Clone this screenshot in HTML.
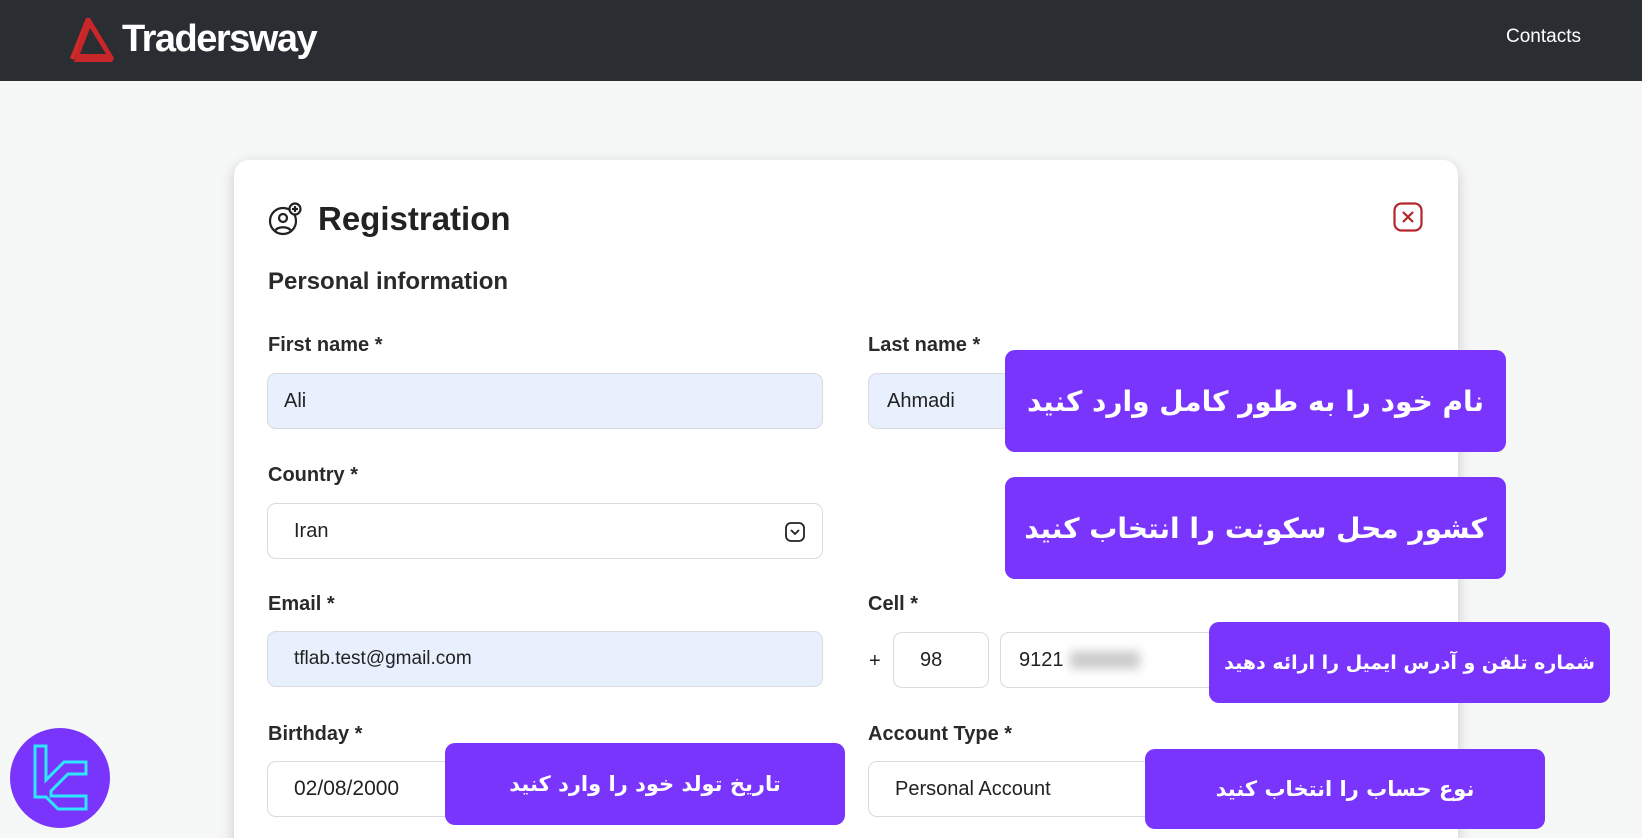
<!DOCTYPE html>
<html style="overflow:hidden;height:838px"><head><meta charset="utf-8"><style>
*{box-sizing:border-box;margin:0;padding:0}
body{width:1642px;height:838px;overflow:hidden;background:#f6f7f7;font-family:"Liberation Sans",sans-serif;position:relative;color:#222}
.hdr{position:absolute;left:0;top:0;width:1642px;height:81px;background:#2a2d32}
.abs{position:absolute}
.card{position:absolute;left:234px;top:160px;width:1224px;height:700px;background:#fff;border-radius:15px 15px 0 0;box-shadow:0 4px 14px rgba(0,0,0,.18)}
.lbl{position:absolute;font-size:20px;font-weight:bold;color:#2a2a2a}
.inp{position:absolute;height:56px;border:1px solid #d8dadd;border-radius:9px;font-size:20px;color:#222;display:flex;align-items:center;padding-left:16px}
.blue{background:#e8f0fe}
.ov{position:absolute;background:#7a35fd;border-radius:10px;color:#fff;font-family:"DejaVu Sans",sans-serif;font-weight:bold;display:flex;align-items:center;justify-content:center;direction:rtl;white-space:nowrap;letter-spacing:-0.5px}
</style></head><body>
<div class="hdr"></div>
<svg class="abs" style="left:68px;top:16px" width="52" height="46" viewBox="0 0 52 46">
<path d="M18 2 L2 42 L6 44 L20 8 Z" fill="#d02a2a"/>
<path d="M18 2 L22 2 L46 42 L44 46 L6 46 Z M22 12 L12 38 L38 38 Z" fill="#c9262a" fill-rule="evenodd"/>
<path d="M14 32 L22 18 L30 32 Z" fill="#2a2d32"/>
</svg>
<div class="abs" style="left:122px;top:18px;font-size:38px;font-weight:bold;color:#fff;letter-spacing:-1.5px">Tradersway</div>
<div class="abs" style="left:1506px;top:26px;font-size:19px;color:#fff">Contacts</div>
<div class="card"></div>
<svg class="abs" style="left:268px;top:202px" width="34" height="34" viewBox="0 0 34 34" fill="none" stroke="#222" stroke-width="2.2">
<circle cx="15" cy="19" r="13"/><circle cx="15" cy="16" r="4"/><path d="M7 29c2-5 14-5 16 0"/>
<circle cx="27" cy="7" r="5.5" fill="#fff"/><path d="M27 4v6M24 7h6"/></svg>
<div class="abs" style="left:318px;top:200px;font-size:33px;font-weight:bold;color:#222">Registration</div>
<svg class="abs" style="left:1393px;top:202px" width="30" height="30" viewBox="0 0 30 30" fill="none" stroke="#b3262a" stroke-width="2.2"><rect x="1.5" y="1.5" width="27" height="27" rx="7"/><path d="M10 10l10 10M20 10l-10 10"/></svg>
<div class="abs" style="left:268px;top:268px;font-size:24px;font-weight:bold;color:#2a2a2a">Personal information</div>
<div class="lbl" style="left:268px;top:334px">First name *</div>
<div class="lbl" style="left:868px;top:334px">Last name *</div>
<div class="inp blue" style="left:267px;top:373px;width:556px">Ali</div>
<div class="inp blue" style="left:868px;top:373px;width:554px;padding-left:18px">Ahmadi</div>
<div class="lbl" style="left:268px;top:464px">Country *</div>
<div class="inp" style="left:267px;top:503px;width:556px;padding-left:26px">Iran
<svg class="abs" style="left:517px;top:18px" width="20" height="20" viewBox="0 0 20 20" fill="none" stroke="#222" stroke-width="1.8"><rect x="1" y="1" width="18" height="18" rx="5"/><path d="M6 8l4 4 4-4"/></svg></div>
<div class="lbl" style="left:268px;top:593px">Email *</div>
<div class="inp blue" style="left:267px;top:631px;width:556px;padding-left:26px;font-size:19px">tflab.test@gmail.com</div>
<div class="lbl" style="left:868px;top:593px">Cell *</div>
<div class="abs" style="left:869px;top:650px;font-size:20px">+</div>
<div class="inp" style="left:893px;top:632px;width:96px;padding-left:26px">98</div>
<div class="inp" style="left:1000px;top:632px;width:422px;padding-left:18px">9121<span style="display:inline-block;width:70px;height:18px;background:#ccc;filter:blur(5px);margin-left:6px"></span></div>
<div class="lbl" style="left:268px;top:723px">Birthday *</div>
<div class="inp" style="left:267px;top:761px;width:556px;padding-left:26px;font-size:21px">02/08/2000</div>
<div class="lbl" style="left:868px;top:723px">Account Type *</div>
<div class="inp" style="left:868px;top:761px;width:554px;padding-left:26px">Personal Account</div>
<div class="ov" style="left:1005px;top:350px;width:501px;height:102px;font-size:28px">نام خود را به طور کامل وارد کنید</div>
<div class="ov" style="left:1005px;top:477px;width:501px;height:102px;font-size:28px">کشور محل سکونت را انتخاب کنید</div>
<div class="ov" style="left:1209px;top:622px;width:401px;height:81px;font-size:19px">شماره تلفن و آدرس ایمیل را ارائه دهید</div>
<div class="ov" style="left:445px;top:743px;width:400px;height:82px;font-size:21px">تاریخ تولد خود را وارد کنید</div>
<div class="ov" style="left:1145px;top:749px;width:400px;height:80px;font-size:21px">نوع حساب را انتخاب کنید</div>
<svg class="abs" style="left:10px;top:728px" width="100" height="100" viewBox="0 0 100 100">
<circle cx="50" cy="50" r="50" fill="#7a35fd"/>
<path d="M25 18h11v34l18-18h22v12H58L41 63v5h35v13H48L36 69h-11z" fill="none" stroke="#2ee6ff" stroke-width="3"/>
</svg>
</body></html>
